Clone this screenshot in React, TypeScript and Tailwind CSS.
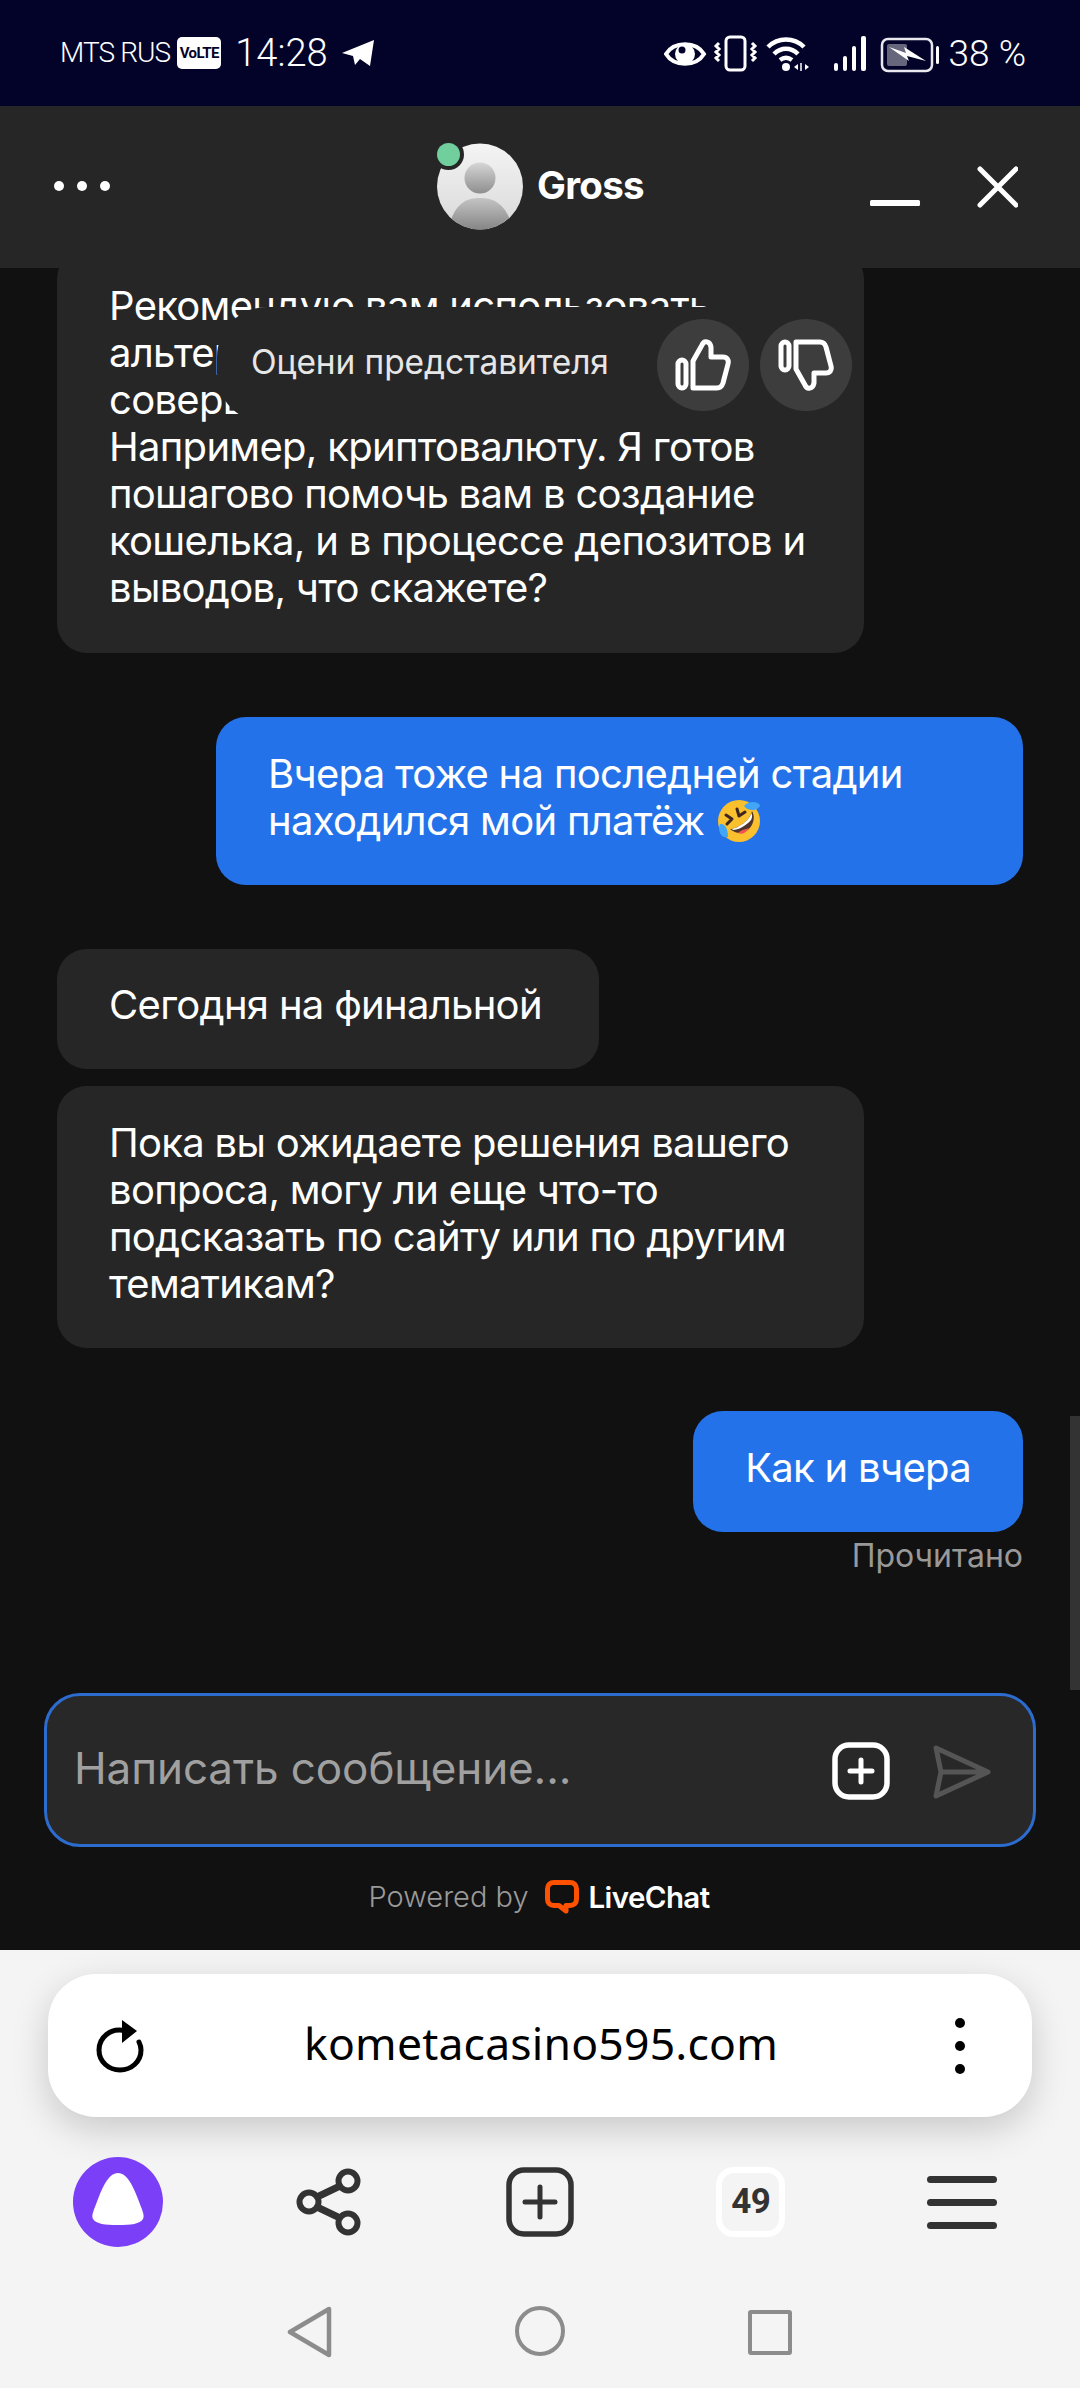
import React from 'react';

function TelegramArrow() {
  return (
    <svg width="32" height="28" viewBox="0 0 32 28" className="ml-[14px]">
      <path d="M32 1 L28 27 L18 20 L13 26 L11 17 L0 14 Z" fill="#fff" />
    </svg>
  );
}

function StatusIcons() {
  return (
    <svg width="275" height="40" viewBox="0 0 275 40" fill="none">
      {/* eye */}
      <path d="M2 21 C10 8 32 8 40 21 C32 34 10 34 2 21 Z" stroke="#fff" strokeWidth="4" />
      <circle cx="21" cy="21" r="10" fill="#fff" />
      <circle cx="18" cy="17" r="3.5" fill="#03032a" />
      {/* vibrate */}
      <rect x="62" y="4" width="19" height="33" rx="4" stroke="#fff" strokeWidth="3" />
      <path d="M55 10 l-3 3 l3 3 l-3 3 l3 3 l-3 3 l3 3 M88 10 l3 3 l-3 3 l3 3 l-3 3 l3 3 l-3 3" stroke="#fff" strokeWidth="3" />
      {/* wifi */}
      <path d="M104 14 C114 4 130 4 140 14 M110 21 C117 14 127 14 134 21 M116 27 C120 24 124 24 128 27" stroke="#fff" strokeWidth="4.500" />
      <circle cx="122" cy="34" r="4" fill="#fff" />
      <path d="M134 31 v6 l-4 -3 Z M141 31 v6 l4 -3 Z" fill="#fff" />
      <path d="M137 30 v8" stroke="#fff" strokeWidth="1.5" />
      {/* signal */}
      <rect x="170" y="30" width="4" height="8" rx="2" fill="#fff" />
      <rect x="179" y="23" width="4" height="15" rx="2" fill="#fff" />
      <rect x="188" y="13" width="4" height="25" rx="2" fill="#fff" />
      <rect x="197" y="3" width="5" height="35" rx="2" fill="#fff" />
      {/* battery */}
      <rect x="218" y="6" width="50" height="32" rx="6" stroke="#e8e8ee" strokeWidth="2.5" />
      <rect x="223" y="11" width="20" height="22" rx="2" fill="#66667c" />
      <rect x="272" y="13" width="3" height="18" rx="1.5" fill="#fff" />
      <path d="M225 14 L242 20 L240 14 L262 28 L243 23 L245 28 Z" fill="#fff" />
    </svg>
  );
}

function StatusBar() {
  return (
    <div className="h-[106px] shrink-0 bg-[#03032a] flex items-center pl-[60px] pr-[54px] text-white font-['Roboto',sans-serif] font-light">
      <span className="text-[28px] tracking-[-0.9px]">MTS RUS</span>
      <span className="ml-[7px] w-[44px] h-[32px] bg-white rounded-[5px] text-[#03032a] text-[15px] font-bold flex items-center justify-center tracking-[-0.6px]">VoLTE</span>
      <span className="ml-[14px] text-[38px] leading-none">14:28</span>
      <TelegramArrow />
      <div className="ml-auto flex items-center">
        <StatusIcons />
        <span className="ml-[10px] text-[37px] leading-none">38 %</span>
      </div>
    </div>
  );
}

function Avatar() {
  return (
    <div className="relative w-[86px] h-[87px]">
      <svg width="86" height="87" viewBox="0 0 86 87">
        <defs>
          <linearGradient id="face" x1="0" y1="0" x2="0" y2="1">
            <stop offset="0" stopColor="#f4f4f4" />
            <stop offset="1" stopColor="#d9d9d9" />
          </linearGradient>
          <linearGradient id="head" x1="0" y1="0" x2="0" y2="1">
            <stop offset="0" stopColor="#d6d6d6" />
            <stop offset="1" stopColor="#8e8e8e" />
          </linearGradient>
          <linearGradient id="body" x1="0" y1="0" x2="0" y2="1">
            <stop offset="0" stopColor="#c4c4c4" />
            <stop offset="1" stopColor="#7f7f7f" />
          </linearGradient>
          <clipPath id="disc">
            <circle cx="43" cy="43.5" r="43" />
          </clipPath>
        </defs>
        <circle cx="43" cy="43.5" r="43" fill="url(#face)" />
        <g clipPath="url(#disc)">
          <circle cx="43" cy="35" r="15.5" fill="url(#head)" />
          <path d="M15 74 C22 58 32 55 43 55 C54 55 64 58 72 74 L72 90 L15 90 Z" fill="url(#body)" />
        </g>
      </svg>
      <span className="absolute left-0 top-0 w-[31px] h-[31px] -ml-[4px] -mt-[4px] rounded-full bg-[#262626] flex items-center justify-center">
        <span className="w-[23px] h-[23px] rounded-full bg-[#71cf9d]" />
      </span>
    </div>
  );
}

function Header() {
  return (
    <div className="h-[162px] shrink-0 bg-[#262626] flex items-center pl-[54px] pr-[62px]">
      <div className="w-[56px] flex justify-between -mt-[2px]">
        <span className="w-[10px] h-[10px] rounded-full bg-white" />
        <span className="w-[10px] h-[10px] rounded-full bg-white" />
        <span className="w-[10px] h-[10px] rounded-full bg-white" />
      </div>
      <div className="ml-[327px] flex items-center -mt-[1px]">
        <Avatar />
        <span className="ml-[14px] text-[38.500px] font-bold text-white tracking-[-0.7px] -mt-[2px]">Gross</span>
      </div>
      <svg width="148" height="42" viewBox="0 0 148 42" fill="none" className="ml-auto -mt-[1px]">
        <rect x="0" y="34" width="50" height="6" rx="1.5" fill="#fff" />
        <path d="M110 3 L146 39 M146 3 L110 39" stroke="#fff" strokeWidth="5" strokeLinecap="round" />
      </svg>
    </div>
  );
}

function LaughEmoji() {
  return (
    <svg width="44" height="44" viewBox="0 0 44 44" className="inline-block align-[-8px] ml-[2px]">
      <circle cx="22" cy="22" r="21" fill="#fbc02d" />
      <path d="M14 15 L20 19 L15 24 M25 9 L27 16 L33 12" stroke="#3e2723" strokeWidth="3" fill="none" strokeLinecap="round" strokeLinejoin="round" transform="translate(-5,1)" />
      <path d="M13 30 C20 30 33 22 35 12 C42 24 27 42 13 30 Z" fill="#4e342e" />
      <path d="M15 30 C21 29 32 22 34.500 14 C35.500 17 35 19 34 21 C29 27 21 31 16 31 Z" fill="#fff" />
      <path d="M21 34 C25 30 30 30 32 29 C29 34 25 36 21 34 Z" fill="#ef5350" />
      <path d="M27 7 C31 2 40 2 43 6 C42 12 31 13 27 7 Z" fill="#42a5f5" />
      <path d="M3 25 C8 24 11 30 11 38 C5 40 0 33 3 25 Z" fill="#42a5f5" />
    </svg>
  );
}

function ThumbIcon() {
  return (
    <svg width="56" height="52" viewBox="0 0 56 52" fill="none" className="block">
      <rect x="3" y="21" width="8" height="28" rx="4" stroke="#fff" strokeWidth="5" />
      <path d="M18 22 L27 6 C29 1 35 2 36 8 V18 H48 C52 18 54 21 53 25 L48 44 C47 47 45 49 42 49 H18 Z" stroke="#fff" strokeWidth="5" strokeLinejoin="round" />
    </svg>
  );
}

function RatingPopup() {
  return (
    <div className="absolute left-[217px] top-[39px] w-[643px] h-[116px] rounded-[50px] bg-[#262626] flex items-center pl-[34px]">
      <span className="text-[33.500px] tracking-[-0.1px] text-[#e6e6e6] leading-none -mt-[4px]">Оцени представителя</span>
      <button className="absolute left-[440px] top-[12px] w-[92px] h-[92px] rounded-full bg-[#3d3d3d] flex items-center justify-center">
        <ThumbIcon />
      </button>
      <button className="absolute left-[543px] top-[12px] w-[92px] h-[92px] rounded-full bg-[#3d3d3d] flex items-center justify-center">
        <span className="-scale-y-100 block">
          <ThumbIcon />
        </span>
      </button>
    </div>
  );
}

function Messages() {
  return (
    <div className="flex-1 min-h-0 overflow-hidden flex flex-col justify-end px-[57px] pb-[117px] text-white text-[40px] tracking-[-0.7px] leading-[47px]">
      <div className="shrink-0 w-[807px] rounded-[30px] bg-[#262626] pl-[52px] pr-[40px] pt-[33px] pb-[42px]">
        Рекомендую вам использовать<br />
        альтернативные методы для<br />
        совершения депозитов.<br />
        Например, криптовалюту. Я готов<br />
        пошагово помочь вам в создание<br />
        кошелька, и в процессе депозитов и<br />
        выводов, что скажете?
      </div>
      <div className="shrink-0 self-end w-[807px] mt-[64px] rounded-[30px] bg-[#2472e9] pl-[52px] pr-[40px] pt-[33px] pb-[41px]">
        Вчера тоже на последней стадии<br />
        находился мой платёж <LaughEmoji />
      </div>
      <div className="shrink-0 w-[542px] mt-[64px] rounded-[30px] bg-[#262626] px-[52px] pt-[32px] pb-[41px]">Сегодня на финальной</div>
      <div className="shrink-0 w-[807px] mt-[17px] rounded-[30px] bg-[#262626] pl-[52px] pr-[40px] pt-[33px] pb-[41px]">
        Пока вы ожидаете решения вашего<br />
        вопроса, могу ли еще что-то<br />
        подсказать по сайту или по другим<br />
        тематикам?
      </div>
      <div className="shrink-0 self-end w-fit mt-[63px] rounded-[30px] bg-[#2472e9] px-[52px] pt-[33px] pb-[41px]">Как и вчера</div>
      <div className="shrink-0 self-end mt-[4px] text-[32px] tracking-normal leading-[40px] text-[#999]">Прочитано</div>
    </div>
  );
}

function Composer() {
  return (
    <div className="shrink-0 mx-[44px] h-[154px] rounded-[36px] border-[3px] border-[#2d6ccf] bg-[#282828] flex items-center pl-[27px] pr-[42px]">
      <span className="text-[44px] tracking-[-0.1px] text-[#a0a0a0] leading-none -mt-[4px]">Написать сообщение...</span>
      <svg width="58" height="58" viewBox="0 0 58 58" fill="none" className="ml-auto mt-[2px]">
        <rect x="3" y="3" width="52" height="52" rx="14" stroke="#fff" strokeWidth="5.500" />
        <path d="M29 18 V40 M18 29 H40" stroke="#fff" strokeWidth="5" strokeLinecap="round" />
      </svg>
      <svg width="58" height="54" viewBox="0 0 58 54" fill="none" className="ml-[43px] mt-[3px]">
        <path d="M3 3 L55 27 L3 51 L8 27 Z M8 27 H55" stroke="#555" strokeWidth="5" strokeLinejoin="round" />
      </svg>
    </div>
  );
}

function PoweredBy() {
  return (
    <div className="shrink-0 h-[103px] flex items-center justify-center pb-[3px] -ml-[2px]">
      <span className="text-[29px] text-[#9a9a9a] font-light">Powered by</span>
      <svg width="34" height="35" viewBox="0 0 34 35" fill="none" className="ml-[16px]">
        <path d="M9 2.500 H25 C29 2.500 31.500 5 31.500 9 V19 C31.500 23 29 25.500 25 25.500 H21 V31 L14 25.500 H9 C5 25.500 2.500 23 2.500 19 V9 C2.500 5 5 2.500 9 2.500 Z" stroke="#ff5100" strokeWidth="5" strokeLinejoin="round" />
      </svg>
      <span className="ml-[10px] text-[29.500px] font-semibold text-white tracking-[-0.6px]">LiveChat</span>
    </div>
  );
}

function BrowserChrome() {
  return (
    <div className="h-[438px] shrink-0 bg-[#f4f4f4] pt-[24px]">
      <div className="mx-[48px] h-[143px] rounded-[48px] bg-white shadow-[0_12px_36px_rgba(0,0,0,0.18)] flex items-center pl-[48px] pr-[67px]">
        <svg width="48" height="54" viewBox="0 0 48 54" fill="none">
          <path d="M30 12 C14 8 3 19 3 31 C3 43 13 51 24 51 C35 51 45 43 45 31 C45 28 44 25 43 23" stroke="#000" strokeWidth="5" strokeLinecap="round" />
          <path d="M26 1 L41 12 L26 24 Z" fill="#000" />
        </svg>
        <span className="ml-[160px] font-['Noto_Sans',sans-serif] text-[44.500px] text-black leading-none tracking-[0.2px] -mt-[4px]">kometacasino595.com</span>
        <div className="ml-auto flex flex-col gap-[13px]">
          <span className="w-[10px] h-[10px] rounded-full bg-black" />
          <span className="w-[10px] h-[10px] rounded-full bg-black" />
          <span className="w-[10px] h-[10px] rounded-full bg-black" />
        </div>
      </div>

      <div className="mt-[40px] px-[13px] grid grid-cols-5 h-[90px] items-center justify-items-center">
        <svg width="90" height="90" viewBox="0 0 90 90">
          <circle cx="45" cy="45" r="45" fill="#7b3ff8" />
          <path d="M45 16 C53 16 59 26 65 42 C69 53 72 58 70 62 C67 67 58 68 45 68 C32 68 23 67 20 62 C18 58 21 53 25 42 C31 26 37 16 45 16 Z" fill="#fff" />
        </svg>
        <svg width="66" height="68" viewBox="0 0 66 68" fill="none" stroke="#333" strokeWidth="6">
          <circle cx="52" cy="13" r="9.500" />
          <circle cx="13" cy="34" r="9.500" />
          <circle cx="52" cy="55" r="9.500" />
          <path d="M21 29 L44 18 M21 39 L44 50" strokeWidth="7" />
        </svg>
        <svg width="68" height="70" viewBox="0 0 68 70" fill="none">
          <rect x="3" y="3" width="62" height="64" rx="15" stroke="#333" strokeWidth="5.500" />
          <path d="M34 20 V50 M19 35 H49" stroke="#333" strokeWidth="5" strokeLinecap="round" />
        </svg>
        <div className="w-[69px] h-[70px] rounded-[18px] border-[6px] border-white flex items-center justify-center text-[#333] text-[35px] font-bold font-['Roboto',sans-serif] tracking-[-0.5px]">49</div>
        <div className="w-[70px] flex flex-col gap-[16px]">
          <span className="h-[7px] rounded-full bg-[#333]" />
          <span className="h-[7px] rounded-full bg-[#333]" />
          <span className="h-[7px] rounded-full bg-[#333]" />
        </div>
      </div>

      <div className="mt-[59px] flex justify-center">
        <div className="w-[230px] flex justify-center">
          <svg width="46" height="52" viewBox="0 0 46 52" fill="none">
            <path d="M42 3 V49 L3 26 Z" stroke="#8c8c8c" strokeWidth="4.500" strokeLinejoin="round" />
          </svg>
        </div>
        <div className="w-[230px] flex justify-center">
          <span className="w-[50px] h-[50px] rounded-full border-[4px] border-[#8c8c8c]" />
        </div>
        <div className="w-[230px] flex justify-center items-center">
          <span className="w-[44px] h-[45px] rounded-[3px] border-[4px] border-[#8c8c8c]" />
        </div>
      </div>
    </div>
  );
}

export default function App() {
  return (
    <div className="w-[1080px] h-[2388px] flex flex-col overflow-hidden bg-[#111] font-['Inter',sans-serif]">
      <StatusBar />
      <Header />
      <div className="relative flex-1 min-h-0 flex flex-col bg-[#111]">
        <Messages />
        <RatingPopup />
        <span className="absolute right-0 top-[1148px] w-[10px] h-[274px] bg-[#333]" />
        <Composer />
        <PoweredBy />
      </div>
      <BrowserChrome />
    </div>
  );
}
